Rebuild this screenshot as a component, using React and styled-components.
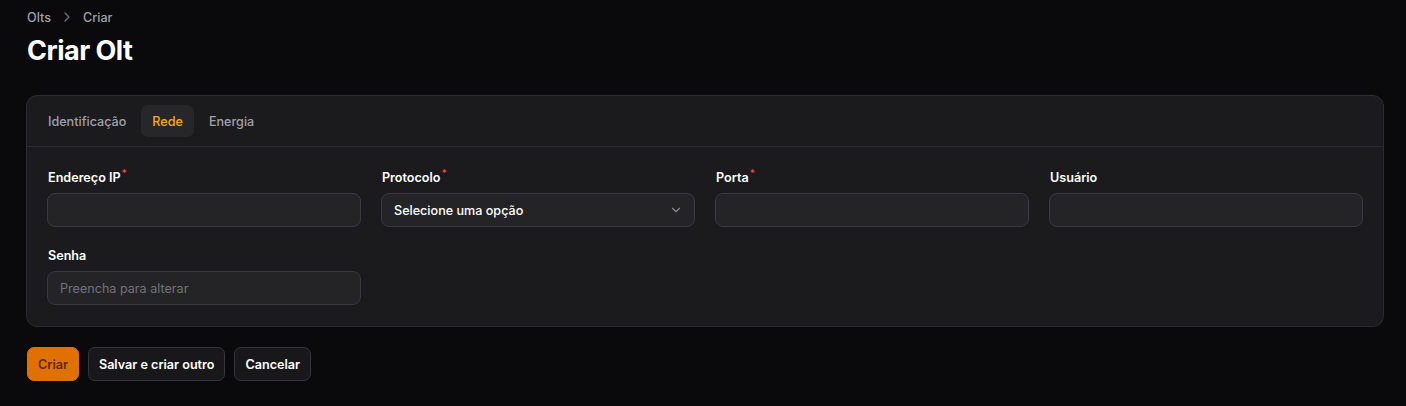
import React from "react";
import styled, { createGlobalStyle } from "styled-components";

const GlobalStyle = createGlobalStyle`
  * { box-sizing: border-box; }
  html, body {
    margin: 0;
    padding: 0;
    background: #0a0a0c;
    font-family: Inter, "Noto Sans", sans-serif;
    -webkit-font-smoothing: antialiased;
  }
`;

const Page = styled.main`
  padding: 8px 22px 24px 26px;
  display: flex;
  flex-direction: column;
`;

const Breadcrumbs = styled.nav`
  display: flex;
  align-items: center;
  gap: 8px;
  height: 18px;
  padding-left: 1px;
  font-size: 12.6px;
  font-weight: 500;
  color: #a1a1aa;
`;

const Crumb = styled.span`
  color: #a1a1aa;
`;

const Heading = styled.h1`
  margin: 8px 0 0;
  padding-left: 1px;
  font-size: 27px;
  line-height: 34px;
  font-weight: 700;
  letter-spacing: -0.5px;
  color: #ffffff;
`;

const Card = styled.section`
  margin-top: 27px;
  background: #1b1b1e;
  border: 1px solid #2c2c30;
  border-radius: 11px;
`;

const TabBar = styled.div`
  display: flex;
  align-items: center;
  gap: 4px;
  height: 51px;
  padding: 0 10px;
  border-bottom: 1px solid #2c2c30;
`;

const Tab = styled.button`
  border: 0;
  font-family: inherit;
  font-size: 12.6px;
  font-weight: 500;
  height: 32px;
  padding: 0 11px;
  border-radius: 7px;
  cursor: pointer;
  background: ${(p) => (p.$active ? "#27272a" : "transparent")};
  color: ${(p) => (p.$active ? "#fbab12" : "#a1a1aa")};
`;

const Fields = styled.div`
  display: grid;
  grid-template-columns: repeat(4, 1fr);
  column-gap: 20px;
  row-gap: 20px;
  padding: 22px 20px 21px 20px;
`;

const Field = styled.div`
  display: flex;
  flex-direction: column;
  gap: 6px;
`;

const Label = styled.label`
  font-size: 12.6px;
  font-weight: 600;
  line-height: 18px;
  height: 18px;
  color: #ffffff;
  padding-left: 1px;

  sup {
    color: #ef4444;
    font-size: 10px;
    line-height: 0;
    margin-left: 1px;
  }
`;

const Input = styled.input`
  height: 34px;
  width: 100%;
  border: 1px solid #3a3a3f;
  border-radius: 8px;
  background: #242427;
  color: #ffffff;
  font-family: inherit;
  font-size: 12.6px;
  padding: 0 12px;
  outline: none;

  &::placeholder {
    color: #71717a;
  }
`;

const SelectBox = styled.div`
  height: 34px;
  border: 1px solid #3a3a3f;
  border-radius: 8px;
  background: #242427;
  color: #ffffff;
  font-size: 12.6px;
  font-weight: 500;
  display: flex;
  align-items: center;
  justify-content: space-between;
  padding: 0 11px 0 12px;
`;

const Actions = styled.div`
  display: flex;
  gap: 9px;
  margin-top: 20px;
  padding-left: 1px;
`;

const Button = styled.button`
  height: 34px;
  padding: 0 10px;
  border-radius: 7px;
  font-family: inherit;
  font-size: 12.6px;
  font-weight: 600;
  cursor: pointer;
  border: 1px solid ${(p) => (p.$primary ? "#e07000" : "#35353a")};
  background: ${(p) => (p.$primary ? "#e07000" : "#18181b")};
  color: ${(p) => (p.$primary ? "#5e2a05" : "#ffffff")};
`;

const Chevron = ({ size = 14, color = "#a1a1aa", right }) => (
  <svg width={size} height={size} viewBox="0 0 20 20" fill="none">
    <path d={right ? "M7.5 5l5 5-5 5" : "M5 7.5l5 5 5-5"} stroke={color} strokeWidth="1.6" strokeLinecap="round" strokeLinejoin="round" />
  </svg>
);

const fields = [
  { label: "Endereço IP", required: true },
  { label: "Protocolo", required: true, select: "Selecione uma opção" },
  { label: "Porta", required: true },
  { label: "Usuário" },
  { label: "Senha", placeholder: "Preencha para alterar" },
];

const App = () => (
  <>
    <GlobalStyle />
    <Page>
      <Breadcrumbs>
        <Crumb>Olts</Crumb>
        <Chevron size={16} color="#71717a" right />
        <Crumb>Criar</Crumb>
      </Breadcrumbs>
      <Heading>Criar Olt</Heading>

      <Card>
        <TabBar>
          <Tab>Identificação</Tab>
          <Tab $active>Rede</Tab>
          <Tab>Energia</Tab>
        </TabBar>
        <Fields>
          {fields.map((f) => (
            <Field key={f.label}>
              <Label>
                {f.label}
                {f.required && <sup>*</sup>}
              </Label>
              {f.select ? (
                <SelectBox>
                  {f.select}
                  <Chevron size={14} color="#8a8a93" />
                </SelectBox>
              ) : (
                <Input placeholder={f.placeholder} />
              )}
            </Field>
          ))}
        </Fields>
      </Card>

      <Actions>
        <Button $primary>Criar</Button>
        <Button>Salvar e criar outro</Button>
        <Button>Cancelar</Button>
      </Actions>
    </Page>
  </>
);

export default App;
